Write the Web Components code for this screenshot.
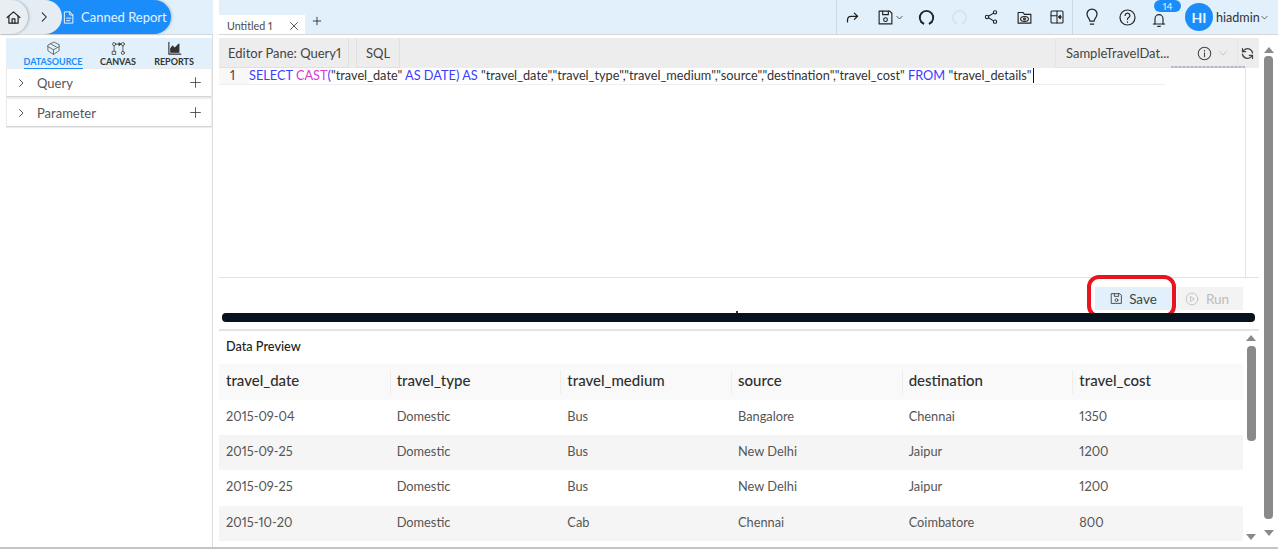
<!DOCTYPE html>
<html>
<head>
<meta charset="utf-8">
<title>Canned Report</title>
<style>
	html, body { margin: 0; padding: 0; height: 100%; overflow: hidden; background: #fff; }
	body { font-family: "Lato", "Liberation Sans", sans-serif; color: #3d3d3d; font-variant-numeric: proportional-nums; }
</style>
</head>
<body>
<app-shell>
	<top-bar></top-bar>
	<side-panel></side-panel>
	<editor-pane></editor-pane>
</app-shell>

<script>
	/**
	 * Shared icon set (24 unit box, stroke based)
	 */
	const icons = {
		home: '<path d="M3 12 12 4l9 8"/><path d="M5.5 10.5V20h13v-9.5"/><path d="M10 20v-6h4v6"/>',
		chevron: '<path d="M9 5l7 7-7 7"/>',
		doc: '<path d="M6 3h8l5 5v13H6z"/><path d="M14 3v5h5"/><path d="M9 13h7M9 17h5"/>',
		plus: '<path d="M12 3v18M3 12h18"/>',
		close: '<path d="M5 5l14 14M19 5 5 19"/>',
		forward: '<path d="M4 19v-3c0-4 2-6 6-6h10"/><path d="M15 5l5 5-5 5"/>',
		save: '<path d="M3 3h15l3 3v15H3z"/><path d="M8 3v5h8V3"/><circle cx="12" cy="15" r="2.6"/>',
		caret: '<path d="M5 9l7 7 7-7"/>',
		redo: '<path d="M7.500 20.500a9.500 9.500 0 1 1 9 0"/><path d="M4.500 18.500l3 2"/><path d="M19.500 18.500l-3 2"/>',
		share: '<circle cx="18" cy="5" r="2.500"/><circle cx="6" cy="12" r="2.500"/><circle cx="18" cy="19" r="2.500"/><path d="M8.200 10.800l7.600-4.600M8.200 13.200l7.600 4.600"/>',
		folderEye: '<path d="M3 5h7l2 2.500h9V20H3z"/><ellipse cx="12" cy="14" rx="5.500" ry="3.400"/><circle cx="12" cy="14" r="1.300"/>',
		panel: '<rect x="3" y="3" width="18" height="18" rx="1.500"/><path d="M12 3v18"/><path d="M3 10h9"/><path d="M19 12h-4"/><path d="M17 9.500 14.500 12l2.500 2.500z" fill="currentColor"/>',
		bulb: '<path d="M9.500 17c0-3-3.500-4-3.500-8.500a6 6 0 0 1 12 0c0 4.500-3.500 5.500-3.500 8.500z"/><path d="M10 20.500h4"/>',
		help: '<circle cx="12" cy="12" r="9.500"/><path d="M9 9.500a3 3 0 1 1 4.500 2.600c-1 .6-1.500 1.100-1.500 2.400"/><path d="M12 17.500v.5"/>',
		bell: '<path d="M6 18V10a6 6 0 0 1 12 0v8"/><path d="M3.500 18h17"/><path d="M10 21.500h4"/>',
		info: '<circle cx="12" cy="12" r="10"/><path d="M12 11v6M12 7v1"/>',
		refresh: '<path d="M20 11a8 8 0 0 0-14-4l-2 2"/><path d="M4 4v5h5"/><path d="M4 13a8 8 0 0 0 14 4l2-2"/><path d="M20 20v-5h-5"/>',
		play: '<circle cx="12" cy="12" r="10"/><path d="M10 8l6 4-6 4z"/>',
		cube: '<path d="M12 2 3 6.500v9l9 6 9-6v-9z"/><path d="M3 9l9 5 9-5M12 14v7.500"/><path d="M7.500 4.500l9 5"/>',
		flow: '<circle cx="5" cy="5" r="2.500"/><circle cx="19" cy="5" r="2.500"/><rect x="2.500" y="16.500" width="5" height="5"/><circle cx="19" cy="19" r="2.500"/><path d="M8 5h7M5 8v8M19 8v8.500"/><path d="M13 3l3 2-3 2z" fill="currentColor"/>',
		chart: '<path d="M3 2v19h19"/><path d="M6 18v-6l3-4 3 4 3-3 4-4v13z" fill="currentColor"/>'
	};

	/**
	 * Small icon element: <ui-icon name="save" size="16"></ui-icon>
	 */
	class UiIcon extends HTMLElement {
		connectedCallback() {
			const size = this.getAttribute("size") || 16;
			const weight = this.getAttribute("weight") || 1.8;
			this.attachShadow({ mode: "open" }).innerHTML = `
				<style>:host { display: inline-flex; flex: none; } svg { display: block; }</style>
				<svg width="${size}" height="${size}" viewBox="0 0 24 24" fill="none" stroke="currentColor"
					stroke-width="${weight}" stroke-linecap="round" stroke-linejoin="round">${icons[this.getAttribute("name")]}</svg>`;
		}
	}

	class AppShell extends HTMLElement {
		constructor() {
			super();
			this.attachShadow({ mode: "open" }).innerHTML = `
				<style>
					:host {
						display: grid;
						grid-template-columns: 213px 1fr;
						grid-template-rows: 35px 1fr;
						column-gap: 6px;
						height: 549px;
						border-bottom: 2px solid #c4c4c4;
						box-sizing: border-box;
						overflow: hidden;
					}
					::slotted(top-bar) { grid-column: 1 / 3; }
				</style>
				<slot></slot>`;
		}
	}

	class TopBar extends HTMLElement {
		constructor() {
			super();
			this.attachShadow({ mode: "open" }).innerHTML = `
				<style>
					:host {
						display: grid;
						grid-template-columns: 213px 1fr;
						column-gap: 6px;
						height: 35px;
						color: #222;
					}
					.left, .right { background: #e1f0fa; border-bottom: 1px solid #d3d8db; box-sizing: border-box; height: 35px; display: flex; }
					.crumbs { display: flex; align-items: stretch; height: 34px; }
					.home {
						width: 28px; padding-left: 5px; box-sizing: border-box; border-radius: 0 17px 17px 0; background: #e9eef2;
						box-shadow: 1px 0 3px rgba(0,0,0,.25); display: flex; align-items: center; z-index: 2;
					}
					.arrow {
						width: 38px; margin-left: -4px; padding-left: 13px; box-sizing: border-box;
						display: flex; align-items: center; background: #e4edf4; border-radius: 0 17px 17px 0; z-index: 1;
					}
					.title {
						margin-left: -17px; padding: 0 0 0 16px; width: 126px; box-sizing: border-box;
						display: flex; align-items: center; gap: 5px; background: #1a8dfb; color: #e6f3ff;
						border-radius: 0 17px 17px 0; font-size: 13px; white-space: nowrap;
						box-shadow: 1px 0 3px rgba(0,0,0,.2);
					}
					.tabs { flex: 1; display: flex; align-items: flex-end; }
					.tab {
						width: 86px; height: 19px; background: #fff; display: flex; align-items: center;
						justify-content: space-between; padding: 2px 0 0 8px; box-sizing: border-box; font-size: 10.700px; color: #4a4a4a;
					}
					.tab ui-icon { margin-right: 5px; }
					.add { width: 24px; height: 20px; display: flex; align-items: center; justify-content: center; margin-bottom: 3px; }
					.tools {
						width: 442px; display: flex; align-items: center; border-left: 1px solid #cfd8de; height: 34px; box-sizing: border-box;
					}
					.group { display: flex; align-items: center; height: 34px; }
					.group.a { width: 236px; border-right: 1px solid #cfd8de; box-sizing: border-box; }
					.slot-a { display: flex; align-items: center; justify-content: center; }
					.user { display: flex; align-items: center; font-size: 12.600px; color: #333; white-space: nowrap; }
					.avatar {
						width: 28px; height: 28px; border-radius: 50%; background: #1a8dfb; color: #e8f4ff; font-weight: 700;
						font-size: 14px; display: flex; align-items: center; justify-content: center; margin-right: 3px;
					}
					.bell { position: relative; width: 22px; display: flex; justify-content: center; padding-top: 6px; }
					.count {
						position: absolute; left: 6px; top: -6px; width: 27px; height: 12px; border-radius: 6px; background: #1a8dfb;
						color: #e8f4ff; font-size: 10px; line-height: 12px; text-align: center;
					}
				</style>
				<div class="left">
					<div class="crumbs">
						<div class="home"><ui-icon name="home" size="17" weight="1.7"></ui-icon></div>
						<div class="arrow"><ui-icon name="chevron" size="14"></ui-icon></div>
						<div class="title"><ui-icon name="doc" size="15" weight="1.6"></ui-icon><span>Canned Report</span></div>
					</div>
				</div>
				<div class="right">
					<div class="tabs">
						<div class="tab"><span>Untitled 1</span><ui-icon name="close" size="12" weight="1.8"></ui-icon></div>
						<div class="add"><ui-icon name="plus" size="10" weight="2"></ui-icon></div>
					</div>
					<div class="tools">
						<div class="group a">
							<div class="slot-a" style="width:32px"><ui-icon name="forward" size="15" weight="2"></ui-icon></div>
							<div class="slot-a" style="width:38px;margin-left:3px;gap:1px"><ui-icon name="save" size="17" weight="1.6"></ui-icon><ui-icon name="caret" size="9" weight="2"></ui-icon></div>
							<div class="slot-a" style="width:33px"><ui-icon name="redo" size="17" weight="2.6"></ui-icon></div>
							<div class="slot-a" style="width:34px;color:#d9e3e9"><ui-icon name="redo" size="17" weight="2.6"></ui-icon></div>
							<div class="slot-a" style="width:30px"><ui-icon name="share" size="16" weight="1.6"></ui-icon></div>
							<div class="slot-a" style="width:36px"><ui-icon name="folderEye" size="17" weight="1.6"></ui-icon></div>
							<div class="slot-a" style="width:30px"><ui-icon name="panel" size="16" weight="1.6"></ui-icon></div>
						</div>
						<div class="group" style="flex:1">
							<div class="slot-a" style="width:38px"><ui-icon name="bulb" size="20" weight="1.500"></ui-icon></div>
							<div class="slot-a" style="width:32px"><ui-icon name="help" size="19" weight="1.500"></ui-icon></div>
							<div class="bell" style="margin-left:5px"><ui-icon name="bell" size="16" weight="1.7"></ui-icon><span class="count">14</span></div>
							<div class="user" style="margin-left:15px"><span class="avatar">HI</span><span>hiadmin</span><ui-icon name="caret" size="9" weight="2"></ui-icon></div>
						</div>
					</div>
				</div>`;
		}
	}

	class AccordionRow extends HTMLElement {
		constructor() {
			super();
			this.attachShadow({ mode: "open" }).innerHTML = `
				<style>
					:host {
						display: flex; align-items: center; height: 29px; padding: 0 9px 0 8px;
						background: #fff; border: 1px solid #ececec; border-bottom: 1px solid #d4d4d4; box-shadow: 0 1px 1px #ececec;
						font-size: 13px; color: #555; box-sizing: border-box; margin-bottom: 1px;
					}
					.label { flex: 1; margin-left: 10px; }
					ui-icon { color: #444; }
				</style>
				<ui-icon name="chevron" size="12" weight="1.800"></ui-icon>
				<span class="label"><slot></slot></span>
				<ui-icon name="plus" size="13" weight="1.600"></ui-icon>`;
		}
	}

	class SidePanel extends HTMLElement {
		constructor() {
			super();
			this.attachShadow({ mode: "open" }).innerHTML = `
				<style>
					:host { display: block; padding: 3px 0 0 6px; border-right: 1px solid #ddd; }
					.tabs {
						display: grid; grid-template-columns: 94px 36px 1fr; height: 30px; background: #e1f0fa;
						font-size: 9px; font-weight: 700; color: #333; text-align: center; white-space: nowrap;
					}
					.tab { display: flex; flex-direction: column; align-items: center; padding-top: 3px; gap: 1px; }
					.tab span { padding-bottom: 1px; line-height: 10px; }
					.active { color: #1a8dfb; }
					.active span { border-bottom: 1.500px solid #1a8dfb; }
					.active ui-icon { color: #555; }
				</style>
				<div class="tabs">
					<div class="tab active"><ui-icon name="cube" size="15" weight="1.3"></ui-icon><span>DATASOURCE</span></div>
					<div class="tab"><ui-icon name="flow" size="15" weight="1.2"></ui-icon><span>CANVAS</span></div>
					<div class="tab"><ui-icon name="chart" size="15" weight="1.8"></ui-icon><span>REPORTS</span></div>
				</div>
				<accordion-row>Query</accordion-row>
				<accordion-row>Parameter</accordion-row>`;
		}
	}

	class DataPreview extends HTMLElement {
		constructor() {
			super();
			const columns = ["travel_date", "travel_type", "travel_medium", "source", "destination", "travel_cost"];
			const rows = [
				["2015-09-04", "Domestic", "Bus", "Bangalore", "Chennai", "1350"],
				["2015-09-25", "Domestic", "Bus", "New Delhi", "Jaipur", "1200"],
				["2015-09-25", "Domestic", "Bus", "New Delhi", "Jaipur", "1200"],
				["2015-10-20", "Domestic", "Cab", "Chennai", "Coimbatore", "800"]
			];
			const head = columns.map(c => `<div class="th">${c}</div>`).join("");
			const body = rows.map(r => `<div class="tr">${r.map(c => `<div class="td">${c}</div>`).join("")}</div>`).join("");
			this.attachShadow({ mode: "open" }).innerHTML = `
				<style>
					:host { display: block; border-top: 2px solid #e4e4e4; overflow: hidden; flex: 1; min-height: 0; }
					.wrap { display: grid; grid-template-columns: 1fr 16px; height: 100%; }
					h2 { margin: 0; height: 33px; padding: 6px 0 0 7px; box-sizing: border-box; font-size: 12.700px; font-weight: 500; color: #222; line-height: 18px; }
					.thead, .tr { display: grid; grid-template-columns: repeat(6, 1fr); }
					.thead { height: 36px; background: #f9f9f9; align-items: center; }
					.th { font-size: 15px; color: #2e2e2e; padding-left: 7px; height: 24px; line-height: 20px; box-sizing: border-box; font-weight: 500; }
					.th + .th { border-left: 1px solid #eee; padding-left: 6px; }
					.tr { height: 35.200px; align-items: center; font-size: 12.800px; color: #555; padding-bottom: 3px; box-sizing: border-box; }
					.tr:nth-child(even) { background: #f5f5f5; }
					.td { padding-left: 7px; }
					.bar { display: flex; flex-direction: column; align-items: center; padding: 4px 0 3px; box-sizing: border-box; height: 212px; }
					.up, .down { width: 0; height: 0; border-left: 5px solid transparent; border-right: 5px solid transparent; }
					.up { border-bottom: 6px solid #8a8a8a; }
					.down { border-top: 6px solid #8a8a8a; }
					.thumb { width: 9px; height: 95px; border-radius: 4px; background: #8a8a8a; margin-top: 5px; flex: none; }
					.grow { flex: 1; }
				</style>
				<div class="wrap">
					<div>
						<h2>Data Preview</h2>
						<div class="thead">${head}</div>
						<div>${body}</div>
					</div>
					<div class="bar"><i class="up"></i><i class="thumb"></i><i class="grow"></i><i class="down"></i></div>
				</div>`;
		}
	}

	class EditorPane extends HTMLElement {
		constructor() {
			super();
			this.attachShadow({ mode: "open" }).innerHTML = `
				<style>
					:host { display: grid; grid-template-columns: 1fr 19px; padding-top: 3px; min-height: 0; overflow: hidden; }
					.main { display: flex; flex-direction: column; min-width: 0; min-height: 0; }
					.strip {
						display: flex; align-items: stretch; height: 30px; background: #eeeded; font-size: 13px; color: #444;
						box-sizing: border-box;
					}
					.chip { display: flex; align-items: center; padding: 0 9px; margin-right: 7px; border: 1px solid #e0e0e0; border-width: 0 1px 1px 0; white-space: nowrap; }
					.chip.first { width: 130px; box-sizing: border-box; }
					.chip.sql { width: 44px; justify-content: center; box-sizing: border-box; border-left-width: 1px; }
					.spacer { flex: 1; }
					.source {
						width: 183px; box-sizing: border-box; display: flex; align-items: center; padding: 0 8px 0 10px; margin: 0;
						border: 1px solid #e6e6e6; font-size: 13px; color: #444; white-space: nowrap;
					}
					.source .name { flex: 1; }
					.source .muted { color: #bbb; margin-left: 5px; }
					.refresh { width: 21px; display: flex; align-items: center; justify-content: center; padding-right: 3px; box-sizing: border-box; }
					.code { height: 209px; border-right: 1px solid #e4e4e4; margin-right: 13px; box-sizing: border-box; position: relative; }
					.line {
						height: 16px; width: 946px; display: flex; font-size: 12.750px; line-height: 15px; color: #333;
						border-bottom: 1px solid #efefef; white-space: nowrap;
					}
					.no { width: 30px; padding-left: 11px; box-sizing: border-box; background: #f8f8f8; color: #444; }
					.kw { color: #3d3dff; }
					.fn { color: #d63ad6; }
					.caret { border-right: 1.500px solid #111; height: 15px; margin-left: 1px; }
					.minimap { position: absolute; left: 952px; top: -2px; width: 74px; height: 2px; background: repeating-linear-gradient(90deg, #b5b5cf 0 2px, #cfcfcf 2px 4px); }
					.actions {
						height: 36px; border-top: 1px solid #e2e2e2; display: flex; justify-content: flex-end; align-items: flex-start;
						padding: 9px 16px 0 0; box-sizing: border-box; position: relative; font-size: 13.500px;
					}
					.btn { height: 23px; display: flex; align-items: center; justify-content: center; gap: 6px; box-sizing: border-box; }
					.save { background: #e1f0fa; color: #444; width: 77px; margin-right: 5px; }
					.run { background: #f3f3f3; color: #bcbcbc; width: 66px; padding-right: 6px; gap: 7px; }
					.highlight {
						position: absolute; left: 868px; top: -3px; width: 89px; height: 43px; box-sizing: border-box;
						border: 4px solid #e8141f; border-radius: 12px;
					}
					.divider { height: 9px; margin-left: 3px; margin-right: 4px; background: #07121f; border-radius: 4px; flex: none; position: relative; }
					.divider::after { content: ""; position: absolute; left: 514px; top: -2px; width: 2px; height: 2px; background: #333; }
					.scroll { display: flex; flex-direction: column; align-items: center; padding: 9px 0 6px; box-sizing: border-box; height: 504px; }
					.up, .down { width: 0; height: 0; border-left: 5px solid transparent; border-right: 5px solid transparent; flex: none; }
					.up { border-bottom: 6px solid #8a8a8a; }
					.down { border-top: 6px solid #8a8a8a; margin-top: 11px; }
					.thumb { width: 9px; flex: 1; border-radius: 4px; background: #8a8a8a; margin-top: 3px; }
					.gap { height: 7px; flex: none; }
				</style>
				<div class="main">
					<div class="strip">
						<div class="chip first">Editor Pane: Query1</div>
						<div class="chip sql">SQL</div>
						<div class="spacer"></div>
						<div class="source">
							<span class="name">SampleTravelDat...</span>
							<ui-icon name="info" size="15" weight="1.700"></ui-icon>
							<ui-icon class="muted" name="caret" size="12" weight="1.600"></ui-icon>
						</div>
						<div class="refresh"><ui-icon name="refresh" size="15" weight="2"></ui-icon></div>
					</div>
					<div class="code">
						<div class="minimap"></div>
						<div class="line">
							<span class="no">1</span>
							<span><span class="kw">SELECT</span> <span class="fn">CAST</span><span class="kw">(</span>"travel_date" <span class="kw">AS DATE) AS</span> "travel_date","travel_type","travel_medium","source","destination","travel_cost" <span class="kw">FROM</span> "travel_details"</span><span class="caret"></span>
						</div>
					</div>
					<div class="actions">
						<div class="btn save"><ui-icon name="save" size="13" weight="1.700"></ui-icon>Save</div>
						<div class="btn run"><ui-icon name="play" size="14" weight="1.400"></ui-icon>Run</div>
						<div class="highlight"></div>
					</div>
					<div class="divider"></div>
					<div class="gap"></div>
					<data-preview></data-preview>
				</div>
				<div class="scroll"><i class="up"></i><i class="thumb"></i><i class="down"></i></div>`;
		}
	}

	customElements.define("ui-icon", UiIcon);
	customElements.define("accordion-row", AccordionRow);
	customElements.define("data-preview", DataPreview);
	customElements.define("top-bar", TopBar);
	customElements.define("side-panel", SidePanel);
	customElements.define("editor-pane", EditorPane);
	customElements.define("app-shell", AppShell);
</script>
</body>
</html>
